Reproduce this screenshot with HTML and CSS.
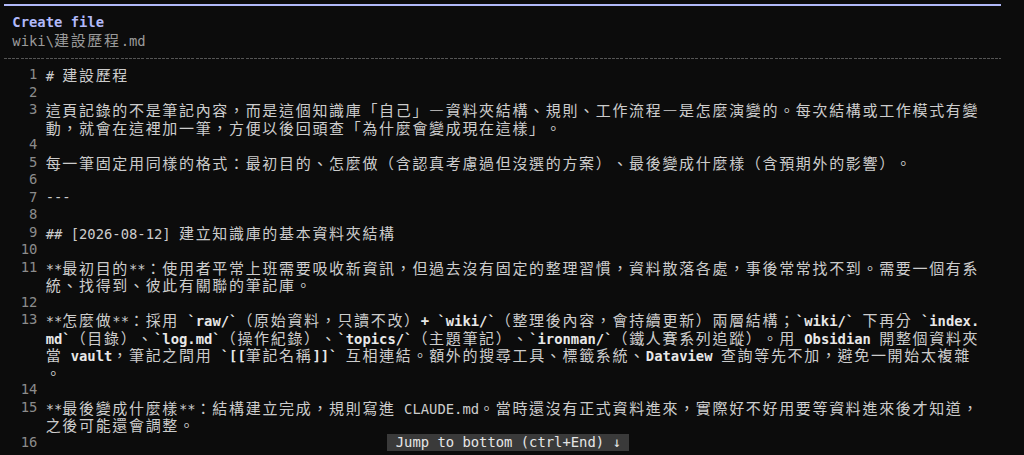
FILE: index.html
```html
<!DOCTYPE html>
<html lang="zh-Hant">
<head>
<meta charset="utf-8">
<title>Create file</title>
<link rel="stylesheet" href="styles.css">
</head>
<body>
<div class="term">
  <div class="rule-top"></div>
  <div class="hd title">Create file</div>
  <div class="hd path">wiki\<span class="w">建設歷程</span>.md</div>
  <div class="dash"></div>

  <div class="r"><span class="n">1</span><span class="t"># <span class="w">建設歷程</span></span></div>
  <div class="r"><span class="n">2</span><span class="t"></span></div>
  <div class="r"><span class="n">3</span><span class="t"><span class="w">這頁記錄的不是筆記內容，而是這個知識庫「自己」—資料夾結構、規則、工作流程—是怎麼演變的。每次結構或工作模式有變</span></span></div>
  <div class="r"><span class="n"></span><span class="t"><span class="w">動，就會在這裡加一筆，方便以後回頭查「為什麼會變成現在這樣」。</span></span></div>
  <div class="r"><span class="n">4</span><span class="t"></span></div>
  <div class="r"><span class="n">5</span><span class="t"><span class="w">每一筆固定用同樣的格式：最初目的、怎麼做（含認真考慮過但沒選的方案）、最後變成什麼樣（含預期外的影響）。</span></span></div>
  <div class="r"><span class="n">6</span><span class="t"></span></div>
  <div class="r"><span class="n">7</span><span class="t">---</span></div>
  <div class="r"><span class="n">8</span><span class="t"></span></div>
  <div class="r"><span class="n">9</span><span class="t">## [2026-08-12] <span class="w">建立知識庫的基本資料夾結構</span></span></div>
  <div class="r"><span class="n">10</span><span class="t"></span></div>
  <div class="r"><span class="n">11</span><span class="t">**<span class="w">最初目的</span>**<span class="w">：使用者平常上班需要吸收新資訊，但過去沒有固定的整理習慣，資料散落各處，事後常常找不到。需要一個有系</span></span></div>
  <div class="r"><span class="n"></span><span class="t"><span class="w">統、找得到、彼此有關聯的筆記庫。</span></span></div>
  <div class="r"><span class="n">12</span><span class="t"></span></div>
  <div class="r"><span class="n">13</span><span class="t">**<span class="w">怎麼做</span>**<span class="w">：採用</span> <b>`raw/`</b><span class="w">（原始資料，只讀不改）</span><b>+ `wiki/`</b><span class="w">（整理後內容，會持續更新）兩層結構；</span><b>`wiki/`</b> <span class="w">下再分</span> <b>`index.</b></span></div>
  <div class="r"><span class="n"></span><span class="t"><b>md`</b><span class="w">（目錄）、</span><b>`log.md`</b><span class="w">（操作紀錄）、</span><b>`topics/`</b><span class="w">（主題筆記）、</span><b>`ironman/`</b><span class="w">（鐵人賽系列追蹤）。用</span> <b>Obsidian</b> <span class="w">開整個資料夾</span></span></div>
  <div class="r"><span class="n"></span><span class="t"><span class="w">當</span> <b>vault</b><span class="w">，筆記之間用</span> <b>`[[</b><span class="w">筆記名稱</span><b>]]`</b> <span class="w">互相連結。額外的搜尋工具、標籤系統、</span><b>Dataview</b> <span class="w">查詢等先不加，避免一開始太複雜</span></span></div>
  <div class="r"><span class="n"></span><span class="t"><span class="w">。</span></span></div>
  <div class="r"><span class="n">14</span><span class="t"></span></div>
  <div class="r"><span class="n">15</span><span class="t">**<span class="w">最後變成什麼樣</span>**<span class="w">：結構建立完成，規則寫進</span> CLAUDE.md<span class="w">。當時還沒有正式資料進來，實際好不好用要等資料進來後才知道，</span></span></div>
  <div class="r"><span class="n"></span><span class="t"><span class="w">之後可能還會調整。</span></span></div>
  <div class="r"><span class="n">16</span><span class="t"></span></div>

  <div class="jump">Jump to bottom (ctrl+End) ↓</div>
</div>
</body>
</html>
```

FILE: styles.css
```css
html, body {
  margin: 0;
  padding: 0;
  background: #0c0c0c;
  overflow: hidden;
}

.term {
  position: relative;
  box-sizing: border-box;
  width: 1001px;
  height: 455px;
  padding: 3.5px 0 0 4px;
  font-family: "DejaVu Sans Mono", "Noto Sans CJK TC", monospace;
  font-size: 13.85px;
  line-height: 17.5px;
  color: #cccccc;
  font-kerning: none;
  text-spacing-trim: space-all;
}

/* wide (CJK) characters take two terminal cells: 15px glyph + 1.67px spacing */
.w {
  font-family: "Noto Sans CJK TC", "Noto Sans CJK JP", sans-serif;
  font-size: 15px;
  letter-spacing: 1.67px;
  font-kerning: none;
  font-variant-east-asian: full-width;
  text-spacing-trim: space-all;
}

b {
  font-weight: bold;
  color: #e8e8e8;
}

.rule-top {
  height: 2px;
  margin-bottom: 8px;
  background: #b1b9f9;
}

.hd {
  height: 17.5px;
  padding-left: 1ch;
  white-space: pre;
}

.title {
  color: #b1b9f9;
  font-weight: bold;
}

.path {
  color: #9a9a9a;
}

.dash {
  height: 17.5px;
  background-image: repeating-linear-gradient(to right, #555555 0 3px, transparent 3px 4.165px);
  background-size: 100% 1px;
  background-position: 0 9px;
  background-repeat: no-repeat;
}

.r {
  display: flex;
  height: 17.5px;
  white-space: pre;
}

.n {
  flex: none;
  width: 4ch;
  margin-right: 1ch;
  text-align: right;
  color: #8c8c8c;
}

.t {
  flex: none;
}

.jump {
  position: absolute;
  left: calc(4px + 46ch);
  top: 434px;
  display: flex;
  align-items: center;
  height: 16.5px;
  padding: 0 1ch;
  background: #3a3a3a;
  color: #e6e6e6;
  white-space: pre;
}
```
